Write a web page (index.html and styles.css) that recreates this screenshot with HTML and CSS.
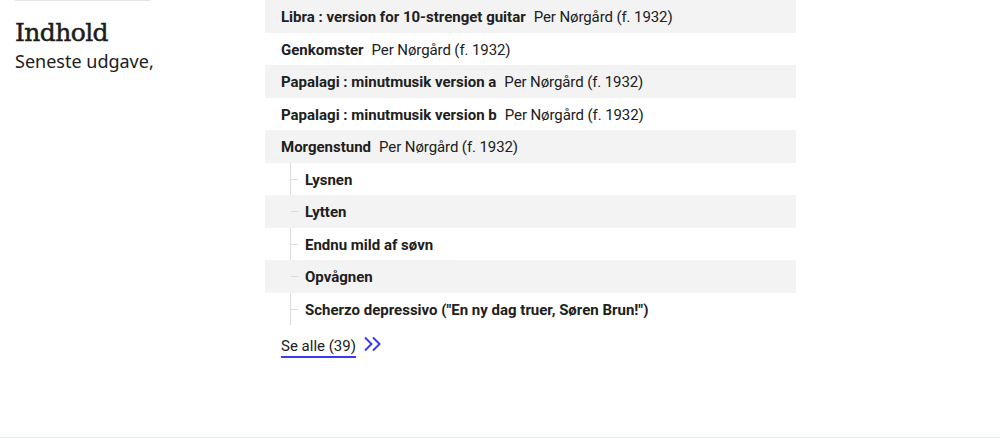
FILE: index.html
```html
<!DOCTYPE html>
<html lang="da">
<head>
<meta charset="utf-8">
<title>Indhold</title>
<link rel="stylesheet" href="styles.css">
</head>
<body>
<div class="page">
  <aside class="side">
    <h2 class="side-title">Indhold</h2>
    <p class="side-sub">Seneste udgave,</p>
  </aside>
  <main class="content">
    <ul class="list">
      <li class="row"><b class="title">Libra : version for 10-strenget guitar</b><span class="author">Per Nørgård (f. 1932)</span></li>
      <li class="row"><b class="title">Genkomster</b><span class="author">Per Nørgård (f. 1932)</span></li>
      <li class="row"><b class="title">Papalagi : minutmusik version a</b><span class="author">Per Nørgård (f. 1932)</span></li>
      <li class="row"><b class="title">Papalagi : minutmusik version b</b><span class="author">Per Nørgård (f. 1932)</span></li>
      <li class="row"><b class="title">Morgenstund</b><span class="author">Per Nørgård (f. 1932)</span></li>
      <li class="group">
        <ul class="sublist">
          <li class="row sub"><b class="title">Lysnen</b></li>
          <li class="row sub"><b class="title">Lytten</b></li>
          <li class="row sub"><b class="title">Endnu mild af søvn</b></li>
          <li class="row sub"><b class="title">Opvågnen</b></li>
          <li class="row sub"><b class="title">Scherzo depressivo ("En ny dag truer, Søren Brun!")</b></li>
        </ul>
      </li>
    </ul>
    <a class="more" href="#"><span class="more-text">Se alle (39)</span><svg class="chev" width="19" height="16" viewBox="0 0 19 16" aria-hidden="true"><path d="M2 1.5 L8.5 8 L2 14.5 M10 1.5 L16.5 8 L10 14.5" fill="none" stroke="#3a3af4" stroke-width="2"/></svg></a>
  </main>
</div>
<footer class="foot"></footer>
</body>
</html>
```
FILE: styles.css
```css
html, body {
  margin: 0;
  padding: 0;
  background: #fff;
}
body {
  width: 1000px;
  height: 438px;
  font-family: Roboto, "Noto Sans", "Liberation Sans", sans-serif;
  color: #202020;
  display: flex;
  flex-direction: column;
  overflow: hidden;
}
.page {
  display: flex;
  flex: 1;
  padding-left: 15px;
}
.side {
  width: 135px;
  margin-right: 115px;
  border-top: 1px solid #e4e4e4;
  padding-top: 16px;
}
.side-title {
  margin: 0;
  font-family: "DejaVu Serif", "Liberation Serif", serif;
  font-weight: 400;
  font-size: 25px;
  line-height: 32px;
  letter-spacing: -0.6px;
  -webkit-text-stroke: 0.5px #1d1d1d;
  color: #1d1d1d;
}
.side-sub {
  margin: 0;
  font-family: "Noto Sans", Roboto, sans-serif;
  font-size: 18px;
  line-height: 24px;
  white-space: nowrap;
}
.content {
  width: 531px;
}
.list, .sublist {
  list-style: none;
  margin: 0;
  padding: 0;
}
.row {
  height: 32.5px;
  box-sizing: border-box;
  display: flex;
  align-items: center;
  padding-left: 16px;
  padding-top: 2px;
  font-size: 15px;
  white-space: nowrap;
}
.list > .row:nth-child(odd) {
  background: #f3f3f3;
}
.title {
  font-weight: 700;
  margin-right: 8px;
}
.author {
  font-weight: 400;
  letter-spacing: -0.1px;
}
.group {
  position: relative;
}
.group::before {
  content: "";
  position: absolute;
  left: 25px;
  top: 0;
  bottom: 0;
  width: 1px;
  background: #dcdcdc;
}
.row.sub {
  padding-left: 40px;
  position: relative;
}
.row.sub::before {
  content: "";
  position: absolute;
  left: 26px;
  top: 50%;
  width: 7px;
  height: 1px;
  background: #dcdcdc;
}
.sublist > .row:nth-child(even) {
  background: #f3f3f3;
}
.more {
  display: inline-flex;
  align-items: center;
  margin-left: 16px;
  margin-top: 11px;
  text-decoration: none;
  color: #202020;
  font-size: 15px;
}
.more-text {
  border-bottom: 2px solid #3a3af4;
  line-height: 20px;
  padding-bottom: 0;
}
.chev {
  margin-left: 7px;
  margin-top: -7px;
}
.foot {
  height: 1px;
  background: #e6ecea;
}
```
